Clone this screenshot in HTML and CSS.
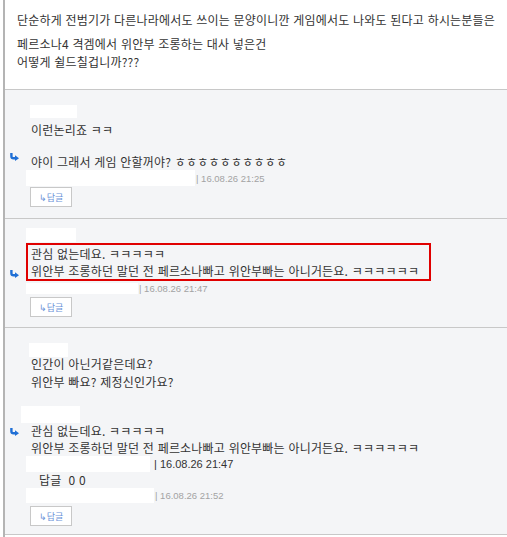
FILE: index.html
```html
<!DOCTYPE html>
<html lang="ko">
<head>
    <meta charset="UTF-8">
    <meta name="viewport" content="width=device-width, initial-scale=1.0">
    <title>댓글</title>
    <link rel="stylesheet" href="styles.css">
</head>
<body>
    <div class="thread">
        <div class="post">
            <p class="first">단순하게 전범기가 다른나라에서도 쓰이는 문양이니깐 게임에서도 나와도 된다고 하시는분들은</p>
            <p>페르소나4 격겜에서 위안부 조롱하는 대사 넣은건</p>
            <p>어떻게 쉴드칠겁니까???</p>
        </div>

        <div class="comment c1">
            <span class="name"></span>
            <p class="line parent">이런논리죠 ㅋㅋ</p>
            <div class="reply">
                <svg class="arrow" width="9" height="8" viewBox="0 0 9 8"><path d="M1.4 0 V3.2 Q1.4 5.3 3.6 5.3 H5.5" fill="none" stroke="#1f6fd6" stroke-width="2.4"/><path d="M5 2.2 L9 5.3 L5 8 Z" fill="#1f6fd6"/></svg>
                <p class="line">야이 그래서 게임 안할꺼야? ㅎㅎㅎㅎㅎㅎㅎㅎㅎㅎ</p>
            </div>
            <div class="meta">
                <span class="name"></span>
                <span class="time">| 16.08.26 21:25</span>
            </div>
            <button class="reply-btn">↳답글</button>
        </div>

        <div class="comment c2">
            <span class="name"></span>
            <div class="reply">
                <svg class="arrow" width="9" height="8" viewBox="0 0 9 8"><path d="M1.4 0 V3.2 Q1.4 5.3 3.6 5.3 H5.5" fill="none" stroke="#1f6fd6" stroke-width="2.4"/><path d="M5 2.2 L9 5.3 L5 8 Z" fill="#1f6fd6"/></svg>
                <div class="marked">
                    <p>관심 없는데요. ㅋㅋㅋㅋㅋ</p>
                    <p>위안부 조롱하던 말던 전 페르소나빠고 위안부빠는 아니거든요. ㅋㅋㅋㅋㅋㅋ</p>
                </div>
            </div>
            <div class="meta">
                <span class="name"></span>
                <span class="time">| 16.08.26 21:47</span>
            </div>
            <button class="reply-btn">↳답글</button>
        </div>

        <div class="comment c3">
            <span class="name"></span>
            <p class="line">인간이 아닌거같은데요?</p>
            <p class="line">위안부 빠요? 제정신인가요?</p>
            <span class="name name-quote"></span>
            <div class="reply">
                <svg class="arrow" width="9" height="8" viewBox="0 0 9 8"><path d="M1.4 0 V3.2 Q1.4 5.3 3.6 5.3 H5.5" fill="none" stroke="#1f6fd6" stroke-width="2.4"/><path d="M5 2.2 L9 5.3 L5 8 Z" fill="#1f6fd6"/></svg>
                <div class="quote">
                    <p>관심 없는데요. ㅋㅋㅋㅋㅋ</p>
                    <p>위안부 조롱하던 말던 전 페르소나빠고 위안부빠는 아니거든요. ㅋㅋㅋㅋㅋㅋ</p>
                </div>
            </div>
            <div class="meta meta-quote">
                <span class="name"></span>
                <span class="time">| 16.08.26 21:47</span>
            </div>
            <p class="counts">답글&nbsp;&nbsp;0 0</p>
            <div class="meta">
                <span class="name"></span>
                <span class="time">| 16.08.26 21:52</span>
            </div>
            <button class="reply-btn">↳답글</button>
        </div>
    </div>
</body>
</html>
```

FILE: styles.css
```css
body {
    margin: 0;
    background-color: #fff;
    font-family: "Noto Sans CJK KR", sans-serif;
    font-size: 12px;
    letter-spacing: 0.2px;
    color: #333;
}
p {
    margin: 0;
}
.thread {
    margin-left: 3px;
    border-left: 2px solid #b4b4b4;
    min-height: 100vh;
}
.post {
    height: 89px;
    padding: 11px 0 0 12px;
    box-sizing: border-box;
    line-height: 18px;
}
.post .first {
    margin-bottom: 6px;
}
.comment {
    background-color: #f4f5f7;
    border-top: 1px solid #c8c8c8;
    padding-left: 26px;
    box-sizing: border-box;
}
.name {
    display: block;
    background-color: #fff;
}
.line {
    line-height: 18px;
}
.reply {
    display: flex;
    margin-left: -21px;
}
.arrow {
    flex: none;
}
.meta {
    display: flex;
    align-items: center;
    margin-left: -5px;
}
.time {
    font-family: "Liberation Sans", sans-serif;
    font-size: 9.5px;
    letter-spacing: 0;
    color: #a3a3a3;
    padding-left: 1px;
}
.reply-btn {
    display: block;
    width: 42px;
    height: 20px;
    margin-left: -1px;
    padding: 0;
    background-color: #fff;
    border: 1px solid #c8c8c8;
    font-family: "Noto Sans CJK KR", sans-serif;
    font-size: 9px;
    color: #6b93d8;
}

/* first comment */
.c1 {
    height: 129px;
}
.c1 > .name {
    width: 47px;
    height: 13px;
    margin: 15px 0 0 -1px;
}
.c1 .parent {
    margin-top: 3px;
}
.c1 .reply {
    margin-top: 14px;
}
.c1 .arrow {
    margin: 0 12px 0 0;
}
.c1 .meta {
    height: 16px;
    margin-top: -1px;
}
.c1 .meta .name {
    width: 169px;
    height: 16px;
}
.c1 .reply-btn {
    margin-top: 1px;
}

/* second comment, marked */
.c2 {
    height: 109px;
}
.c2 > .name {
    width: 50px;
    height: 14px;
    margin: 9px 0 0 -5px;
}
.c2 .reply {
    margin-top: 1px;
    align-items: flex-end;
}
.c2 .arrow {
    margin: 0 7px 3px 0;
}
.marked {
    width: 405px;
    box-sizing: border-box;
    border: 2px solid #e00000;
    padding: 0 3px;
    line-height: 17px;
}
.c2 .meta {
    height: 12px;
    margin-top: 1px;
}
.c2 .meta .name {
    width: 112px;
    height: 11px;
}
.c2 .reply-btn {
    margin-top: 3px;
}

/* third comment with quote */
.c3 {
    height: 208px;
    border-bottom: 1px solid #c8c8c8;
}
.c3 > .name {
    width: 39px;
    height: 14px;
    margin: 15px 0 0 -2px;
}
.c3 > .name + .line {
    margin-top: -2px;
}
.c3 > .name-quote {
    width: 59px;
    height: 17px;
    margin: 15px 0 0 -10px;
}
.c3 .reply {
    margin-top: -1px;
}
.c3 .arrow {
    margin: 6px 12px 0 0;
}
.quote {
    line-height: 17px;
}
.c3 .meta {
    height: 15px;
}
.c3 .meta .name {
    width: 128px;
    height: 15px;
}
.c3 .meta-quote {
    height: 16px;
}
.c3 .meta-quote .name {
    width: 124px;
    height: 16px;
}
.c3 .meta-quote .time {
    font-size: 11px;
    color: #333;
    padding-left: 4px;
}
.counts {
    line-height: 16px;
    margin-left: 8px;
}
.c3 .reply-btn {
    margin-top: 3px;
}
```
